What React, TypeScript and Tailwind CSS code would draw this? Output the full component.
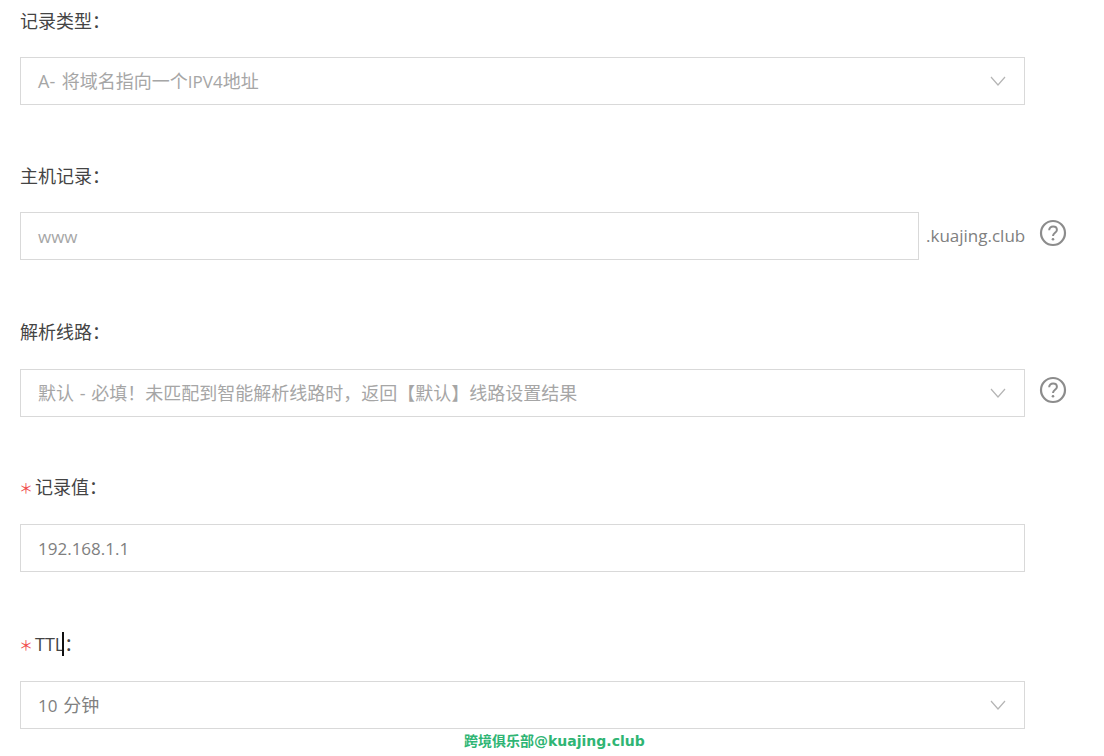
import React from "react";

const FONT = "font-['Open_Sans','Noto_Sans_CJK_SC',sans-serif]";

function Chevron() {
  return (
    <svg width="16" height="10" viewBox="0 0 16 10" fill="none" className="absolute right-[18px] top-[18px]">
      <path d="M1 1l7 8 7-8" stroke="#b5b5b5" strokeWidth="1.2" />
    </svg>
  );
}

function HelpIcon() {
  return (
    <svg width="28" height="28" viewBox="0 0 28 28" fill="none" className="shrink-0">
      <circle cx="14" cy="14" r="12" stroke="#8c8c8c" strokeWidth="2.2" />
      <path d="M10.2 11.2c0-2.2 1.700-3.600 3.900-3.600s3.800 1.400 3.800 3.300c0 2.800-3.900 3-3.900 6" stroke="#8c8c8c" strokeWidth="2" />
      <circle cx="14" cy="20.300" r="1.300" fill="#8c8c8c" />
    </svg>
  );
}

function Box({ children, select, className }: { children: React.ReactNode; select?: boolean; className: string }) {
  return (
    <div className={"relative flex h-[48px] items-center border border-[#d9d9d9] pl-[17px] text-[18px] [word-spacing:1px] " + className}>
      <span>{children}</span>
      {select && <Chevron />}
    </div>
  );
}

function Required() {
  return <span className="-ml-[1px] mr-[1px] w-[15px] text-[14px] text-[#f04b4b]">＊</span>;
}

export default function App() {
  return (
    <div className={"relative h-[756px] overflow-hidden bg-white pl-[20px] text-[#444] " + FONT}>
      {/* 记录类型 */}
      <div className="flex h-[42px] items-center text-[18px]">记录类型：</div>
      <Box select className="mt-[15px] w-[1005px] text-[#a6a6a6]">
        <span className="[word-spacing:2px]">A- </span>将域名指向一个<span className="text-[17px]">IPV4</span>地址
      </Box>

      {/* 主机记录 */}
      <div className="mt-[50px] flex h-[42px] items-center text-[18px]">主机记录：</div>
      <div className="mt-[15px] flex items-center">
        <Box className="w-[899px] text-[#a6a6a6]">
          <span className="text-[17px]">www</span>
        </Box>
        <span className="ml-[7px] w-[99px] text-[17px] text-[#808080]">.kuajing.club</span>
        <span className="ml-[14px] -mt-[6px]"><HelpIcon /></span>
      </div>

      {/* 解析线路 */}
      <div className="mt-[51px] flex h-[42px] items-center text-[18px]">解析线路：</div>
      <div className="mt-[16px] flex items-center">
        <Box select className="w-[1005px] text-[#a6a6a6]">
          默认 - 必填！未匹配到智能解析线路时，返回【默认】线路设置结果
        </Box>
        <span className="ml-[14px] -mt-[6px]"><HelpIcon /></span>
      </div>

      {/* 记录值 */}
      <div className="mt-[49px] flex h-[42px] items-center text-[18px]">
        <Required />记录值：
      </div>
      <Box className="mt-[16px] w-[1005px] text-[#808080]">
        <span className="text-[17px]">192.168.1.1</span>
      </Box>

      {/* TTL */}
      <div className="mt-[51px] flex h-[42px] items-center text-[18px]">
        <Required />
        <span className="relative">
          TTL：
          <span className="absolute left-[27px] top-[1px] h-[24px] w-[2px] bg-[#111]" />
        </span>
      </div>
      <Box select className="mt-[16px] w-[1005px] text-[#808080] [word-spacing:0px]">
        <span className="text-[17px]">10</span> 分钟
      </Box>

      {/* watermark */}
      <div className="absolute left-[464px] top-[732px] font-['DejaVu_Sans','Noto_Sans_CJK_SC',sans-serif] text-[14px] font-bold leading-[18px] text-[#2fb574]">
        跨境俱乐部@kuajing.club
      </div>
    </div>
  );
}
